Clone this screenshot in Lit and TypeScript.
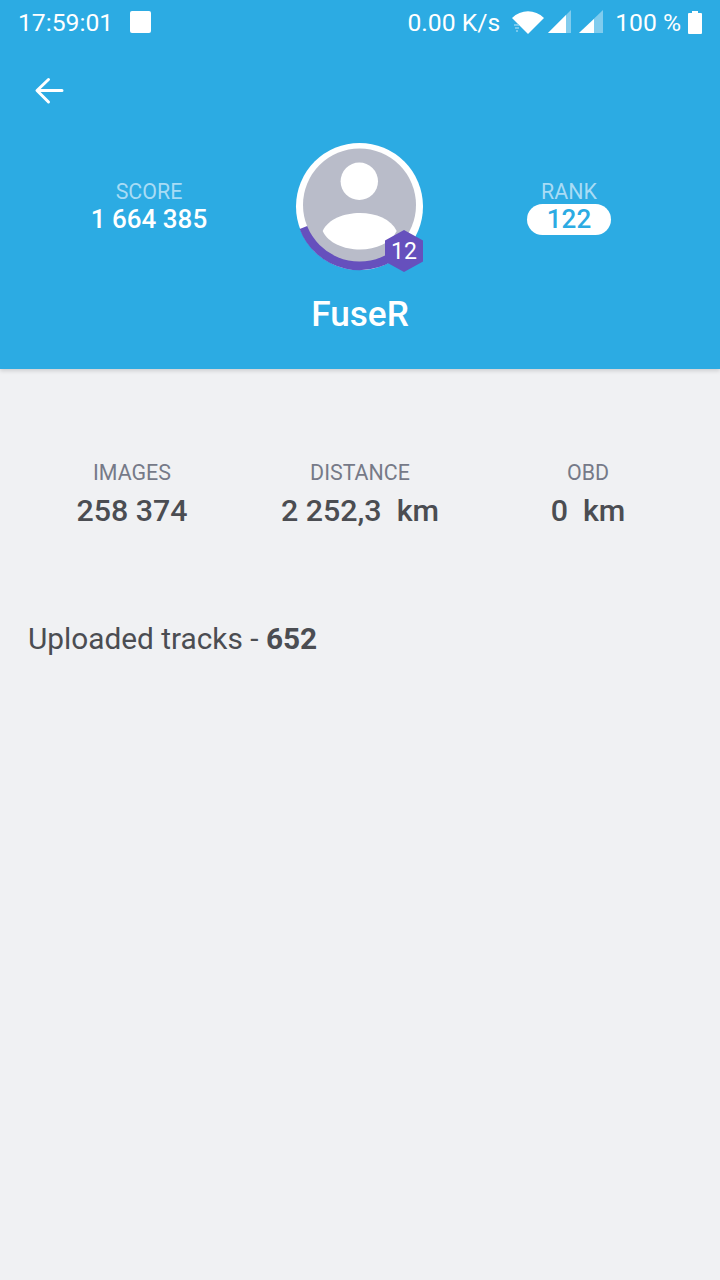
import { LitElement, html, css } from "lit";
import { customElement } from "lit/decorators.js";

@customElement("app-root")
export class AppRoot extends LitElement {
  static styles = css`
    :host { display: block; width: 720px; height: 1280px; background: #f0f1f3; font-family: Roboto, "Liberation Sans", sans-serif; overflow: hidden; }
    .header { height: 369px; background: #2cabe3; box-shadow: 0 2px 4px rgba(0,0,0,.14); display: flex; flex-direction: column; color: #fff; }
    .status { height: 44px; display: flex; align-items: center; padding: 0 18px; font-size: 24.7px; color: #fff; box-sizing: border-box; }
    .time { width: 112px; }
    .stop { width: 21px; height: 22px; background: #fff; border-radius: 2px; margin-left: -0.5px; }
    .spacer { flex: 1; }
    .net { margin-right: 12px; }
    .icons { display: flex; align-items: center; }
    .pct { margin: 0 7px 0 12px; }
    .toolbar { height: 50px; box-sizing: border-box; padding: 0 0 4px 33px; display: flex; align-items: center; margin-top: 24px; }
    .toolbar svg { display: block; }
    .hero { display: grid; grid-template-columns: 296px 127px 1fr; height: 127px; margin-top: 25px; }
    .side { display: flex; flex-direction: column; align-items: center; padding-top: 37px; }
    .side.l { padding-left: 2px; }
    .side.r { padding-right: 5px; }
    .label { font-size: 21.4px; line-height: 24px; }
    .hero .label { color: #a8dcf5; }
    .value { font-size: 26px; font-weight: 500; line-height: 30px; }
    .pill { background: #fff; color: #2cabe3; border-radius: 16px; width: 84px; height: 31px; line-height: 31px; text-align: center; font-size: 26px; font-weight: 500; margin-top: 0; }
    .avatar { position: relative; width: 127px; height: 127px; }
    .avatar svg.main { display: block; overflow: visible; }
    .badge { position: absolute; left: 89px; top: 87px; width: 38px; height: 42px; }
    .badge svg { display: block; }
    .badge span { position: absolute; inset: 0; display: flex; align-items: center; justify-content: center; font-size: 23px; color: #fff; }
    .name { text-align: center; font-size: 35.2px; font-weight: 500; line-height: 40px; margin-top: 24px; }
    .stats { display: grid; grid-template-columns: repeat(3, 228px); justify-content: center; margin-top: 91px; }
    .stat { display: flex; flex-direction: column; align-items: center; }
    .stat .label { color: #767a88; line-height: 26px; }
    .stat .value { font-size: 30.4px; line-height: 36px; margin-top: 7px; color: #4b4d52; white-space: pre; }
    .tracks { margin: 92px 0 0 28px; font-size: 29.8px; line-height: 36px; color: #4b4d52; }
    .tracks b { font-weight: 700; }
  `;

  render() {
    return html`
      <div class="header">
        <div class="status">
          <span class="time">17:59:01</span>
          <span class="stop"></span>
          <span class="spacer"></span>
          <span class="net">0.00 K/s</span>
          <span class="icons">
            <svg width="32" height="24" viewBox="0 0 32 24"><path d="M0 8 C9 -1 23 -1 32 8 L16 24 L7 15 Z" fill="#fff"/><path d="M2 15h5M3 18h4M4 21h2" stroke="#8fd2f1" stroke-width="1.5"/></svg>
            <svg style="margin-left:4px" width="24" height="24" viewBox="0 0 24 24"><path d="M23 0V23H0Z" fill="#fff" fill-opacity=".4"/><path d="M18 5V23H0Z" fill="#fff"/></svg>
            <svg style="margin-left:7px" width="24" height="24" viewBox="0 0 24 24"><path d="M24 0V23H0Z" fill="#fff" fill-opacity=".4"/><path d="M15 9V23H0Z" fill="#fff"/></svg>
          </span>
          <span class="pct">100 %</span>
          <svg width="14" height="23" viewBox="0 0 14 23"><path d="M4 0h6v2h3a1 1 0 0 1 1 1v19a1 1 0 0 1-1 1H1a1 1 0 0 1-1-1V3a1 1 0 0 1 1-1h3Z" fill="#fff"/></svg>
        </div>
        <div class="toolbar">
          <svg width="32" height="32" viewBox="0 0 32 32"><path d="M29 15.5H5M15.5 4.5 4 15.5l11.5 11.5" fill="none" stroke="#fff" stroke-width="3" stroke-linecap="round" stroke-linejoin="round"/></svg>
        </div>
        <div class="hero">
          <div class="side l">
            <span class="label">SCORE</span>
            <span class="value">1 664 385</span>
          </div>
          <div class="avatar">
            <svg class="main" width="127" height="127" viewBox="0 0 127 127">
              <circle cx="63.5" cy="63.5" r="63.5" fill="#fff"/>
              <path d="M8.7 84 A58.5 58.5 0 0 0 104.5 105" fill="none" stroke="#6650bd" stroke-width="10.8"/>
              <circle cx="63.5" cy="62" r="56.5" fill="#b9bcc9"/>
              <circle cx="63.3" cy="38.3" r="18.7" fill="#fff"/>
              <path d="M26.7 88 C32 76 48 70 64 70 C80 70 95 76 100.7 88 C95 100 80 106.5 64 106.5 C48 106.5 32 100 26.7 88 Z" fill="#fff"/>
            </svg>
            <div class="badge">
              <svg width="38" height="42" viewBox="0 0 38 42"><path d="M19 0 38 10.5V31.5L19 42 0 31.5V10.5Z" fill="#6650bd"/></svg>
              <span>12</span>
            </div>
          </div>
          <div class="side r">
            <span class="label">RANK</span>
            <span class="pill">122</span>
          </div>
        </div>
        <div class="name">FuseR</div>
      </div>
      <div class="stats">
        <div class="stat"><span class="label">IMAGES</span><span class="value">258 374</span></div>
        <div class="stat"><span class="label">DISTANCE</span><span class="value">2 252,3  km</span></div>
        <div class="stat"><span class="label">OBD</span><span class="value">0  km</span></div>
      </div>
      <div class="tracks">Uploaded tracks - <b>652</b></div>
    `;
  }
}
